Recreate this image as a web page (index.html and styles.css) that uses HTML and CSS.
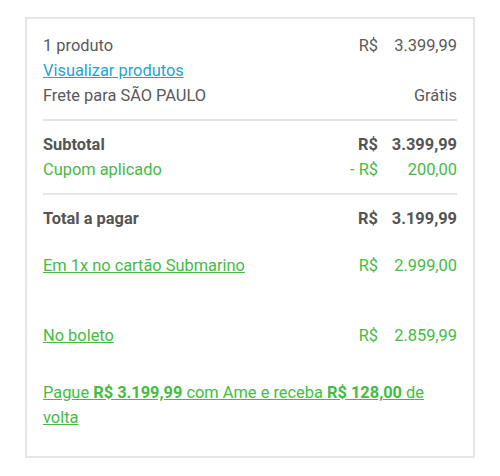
FILE: index.html
```html
<html>
<head>
<meta http-equiv="Content-Type" content="text/html; charset=UTF-8" />
<link rel="stylesheet" href="styles.css">
</head>
<body>

<div class="card">
	<div class="section">
		<div class="row">
			<span class="label">1 produto</span>
			<span class="price"><span class="cur">R$</span><span class="val">3.399,99</span></span>
		</div>
		<div class="row">
			<a class="link" href="#">Visualizar produtos</a>
		</div>
		<div class="row">
			<span class="label">Frete para SÃO PAULO</span>
			<span class="free">Grátis</span>
		</div>
	</div>

	<div class="section">
		<div class="row strong">
			<span class="label">Subtotal</span>
			<span class="price"><span class="cur">R$</span><span class="val">3.399,99</span></span>
		</div>
		<div class="row green">
			<span class="label">Cupom aplicado</span>
			<span class="price"><span class="cur">- R$</span><span class="val">200,00</span></span>
		</div>
	</div>

	<div class="section last">
		<div class="row strong">
			<span class="label">Total a pagar</span>
			<span class="price"><span class="cur">R$</span><span class="val">3.199,99</span></span>
		</div>

		<div class="row green pay card-pay">
			<a class="label green-link" href="#">Em 1x no cartão Submarino</a>
			<span class="price"><span class="cur">R$</span><span class="val">2.999,00</span></span>
		</div>

		<div class="row green pay boleto">
			<a class="label green-link" href="#">No boleto</a>
			<span class="price"><span class="cur">R$</span><span class="val">2.859,99</span></span>
		</div>

		<p class="ame"><a class="green-link" href="#">Pague <b>R$ 3.199,99</b> com Ame e receba <b>R$ 128,00</b> de volta</a></p>
	</div>
</div>

</body>
</html>
```

FILE: styles.css
```css
:root {
	--color-text: #595959;
	--color-strong: #555555;
	--color-green: #45bb45;
	--color-link: #1fa3d5;
	--color-line: #e5e5e5;
}

body {
	margin: 0;
	background-color: #ffffff;
	font-family: Roboto, "Liberation Sans", sans-serif;
	font-size: 16.4px;
	color: var(--color-text);
}

.card {
	margin: 17px 0 0 25px;
	width: 450px;
	box-sizing: border-box;
	border: 2px solid var(--color-line);
	padding: 14px 16px 26px 16px;
}

.section {
	padding: 0 0 11px 0;
	margin-bottom: 11px;
	border-bottom: 2px solid var(--color-line);
}

.section.last {
	border-bottom: none;
	margin-bottom: 0;
	padding-bottom: 0;
}

.row {
	display: flex;
	justify-content: space-between;
	align-items: center;
	line-height: 25px;
}

.label {
	flex: 1;
}

.price {
	display: flex;
}

.cur {
	width: 40px;
	text-align: right;
}

.val {
	width: 79px;
	text-align: right;
}

.strong {
	font-weight: bold;
	color: var(--color-strong);
}

.green {
	color: var(--color-green);
}

.link {
	color: var(--color-link);
	text-decoration: underline;
}

.green-link {
	color: var(--color-green);
	text-decoration: underline;
}

.card-pay {
	margin-top: 22px;
}

.boleto {
	margin-top: 45px;
}

.ame {
	margin: 32px 0 0 0;
	line-height: 25px;
	padding-right: 20px;
}

.ame b {
	font-weight: bold;
}
```
